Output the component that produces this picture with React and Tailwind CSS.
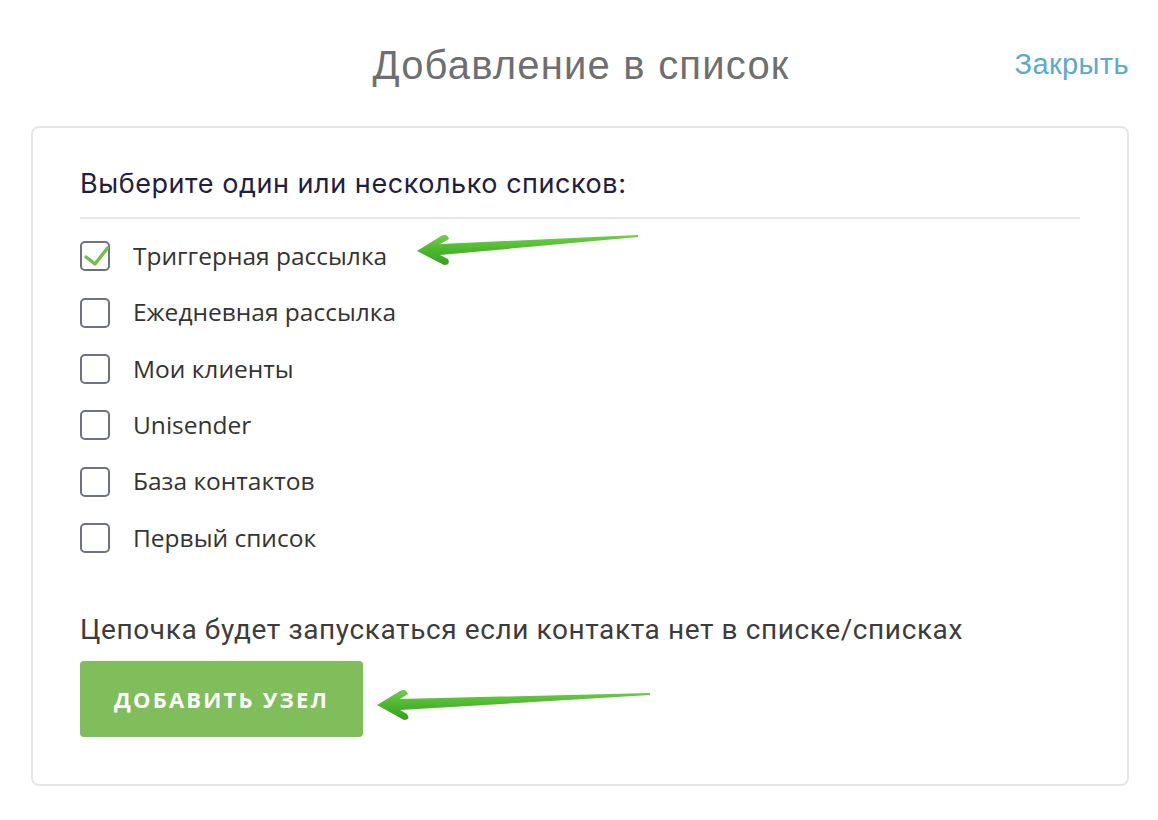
import { useState } from 'react';

const lists = [
  'Триггерная рассылка',
  'Ежедневная рассылка',
  'Мои клиенты',
  'Unisender',
  'База контактов',
  'Первый список',
];

const Arrows = () => (
  <svg
    className="pointer-events-none absolute left-0 top-0"
    width="1158"
    height="820"
    viewBox="0 0 1158 820"
  >
    <defs>
      <linearGradient id="arrowGreen" x1="0" y1="0" x2="0" y2="1">
        <stop offset="0" stopColor="#6fd04a" />
        <stop offset="0.5" stopColor="#4db52e" />
        <stop offset="1" stopColor="#38a020" />
      </linearGradient>
    </defs>
    <path
      d="M417 251 L441 236 Q447 233 449 239 L440 244 L638 235 L638 237 L440 255 L448 259 Q451 265 444 265 Z"
      fill="url(#arrowGreen)"
    />
    <path
      d="M377 705 L400 691 Q406 688 408 694 L400 699 L650 693 L650 695 L400 710 L407 714 Q411 720 404 720 Z"
      fill="url(#arrowGreen)"
    />
  </svg>
);

const Checkbox = ({ checked }) => (
  <span className="flex h-[30px] w-[30px] shrink-0 items-center justify-center rounded-[5px] border-2 border-[#6f7182] bg-white">
    {checked && (
      <svg width="26" height="26" viewBox="0 0 26 26" className="overflow-visible">
        <path
          d="M4 14 L13 21 L25.5 5"
          fill="none"
          stroke="#72c04c"
          strokeWidth="3.4"
          strokeLinecap="round"
          strokeLinejoin="round"
        />
      </svg>
    )}
  </span>
);

export default function App() {
  const [selected, setSelected] = useState([0]);

  const toggle = (i) =>
    setSelected((s) => (s.includes(i) ? s.filter((x) => x !== i) : [...s, i]));

  return (
    <div className="relative h-[820px] w-[1158px] overflow-hidden bg-white pl-[31px] pr-[29px]">
      {/* Header */}
      <header className="grid h-[126px] grid-cols-[1fr_auto_1fr] items-center pt-[4px]">
        <div />
        <h1 className="pl-[2px] text-[40px] font-normal tracking-[1.2px] text-[#6f6f6f] font-['Liberation_Sans',Arial,sans-serif]">
          Добавление в список
        </h1>
        <button className="justify-self-end text-[29px] tracking-[0.4px] text-[#5ea9ca] font-['Liberation_Sans',Arial,sans-serif]">
          Закрыть
        </button>
      </header>

      {/* Card */}
      <section className="rounded-lg border-2 border-[#e6e6e6] px-[47px] pb-[47px] pt-[36px]">
        <p className="text-[27px] leading-[40px] tracking-[0.55px] text-[#1f2040] font-['Inter',sans-serif]">
          Выберите один или несколько списков:
        </p>
        <div className="mt-[13px] h-[2px] bg-[#e6e6e6]" />

        <ul className="mt-[9px]">
          {lists.map((name, i) => (
            <li key={name}>
              <label
                className="flex h-[56.4px] cursor-pointer items-center gap-[23px]"
                onClick={() => toggle(i)}
              >
                <Checkbox checked={selected.includes(i)} />
                <span className="text-[24.5px] text-[#333333] font-['Open_Sans',sans-serif]">
                  {name}
                </span>
              </label>
            </li>
          ))}
        </ul>

        <p className="mt-[48px] text-[28px] leading-[32px] tracking-[0.6px] text-[#3c3c3c] font-['Roboto',sans-serif]">
          Цепочка будет запускаться если контакта нет в списке/списках
        </p>
        <button className="mt-[15px] flex h-[76px] w-[283px] items-center justify-center rounded-[4px] bg-[#80bd5b] text-[22px] font-bold uppercase tracking-[2.2px] text-white font-['Open_Sans',sans-serif]">
          Добавить узел
        </button>
      </section>

      <Arrows />
    </div>
  );
}
